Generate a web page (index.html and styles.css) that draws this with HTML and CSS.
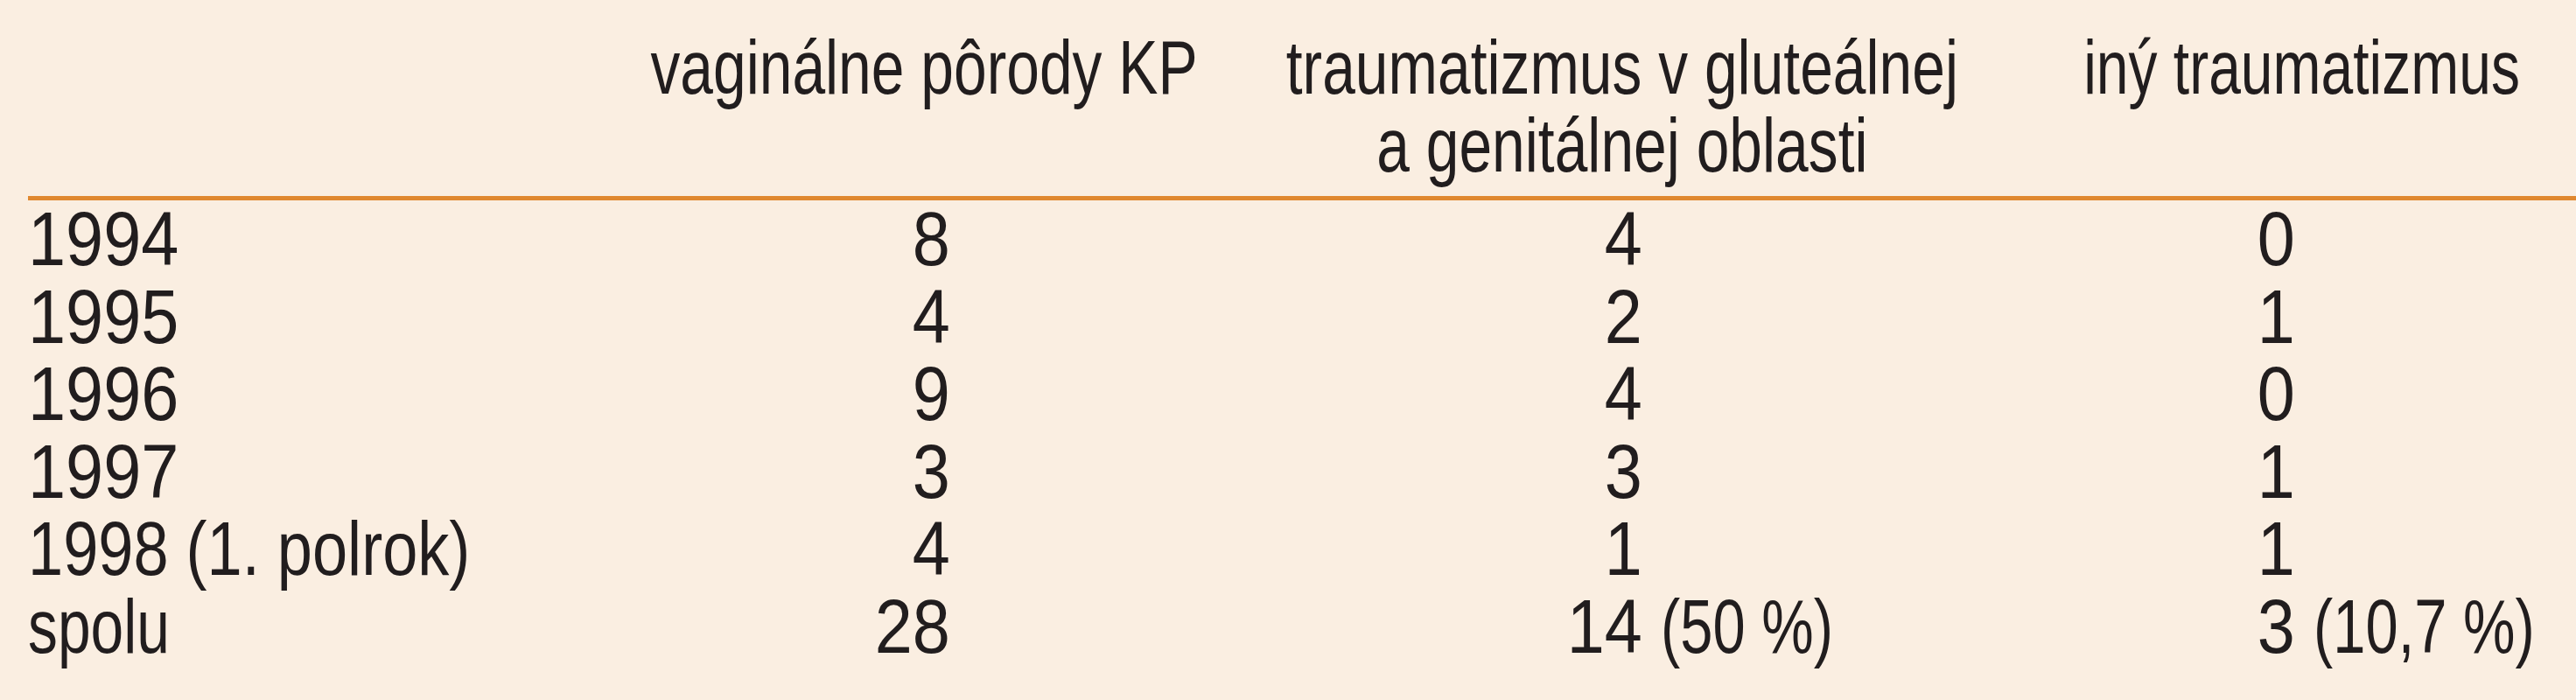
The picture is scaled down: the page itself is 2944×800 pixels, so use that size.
FILE: index.html
```html
<!DOCTYPE html>
<html lang="sk">
<head>
<meta charset="utf-8">
<title>Tabuľka</title>
<link rel="stylesheet" href="styles.css">
</head>
<body>
<div class="table">
  <div class="hcell h0"></div>
  <div class="hcell h1"><span class="t">vaginálne pôrody KP</span></div>
  <div class="hcell h2"><span class="t">traumatizmus v gluteálnej<br>a genitálnej oblasti</span></div>
  <div class="hcell h3"><span class="t">iný traumatizmus</span></div>
  <div class="rule"></div>

  <div class="lbl"><span class="yr">1994</span></div><div class="num"><span>8</span></div><div class="suf"></div><div class="num"><span>4</span></div><div class="suf"></div><div class="num"><span>0</span></div><div class="suf"></div>
  <div class="lbl"><span class="yr">1995</span></div><div class="num"><span>4</span></div><div class="suf"></div><div class="num"><span>2</span></div><div class="suf"></div><div class="num"><span>1</span></div><div class="suf"></div>
  <div class="lbl"><span class="yr">1996</span></div><div class="num"><span>9</span></div><div class="suf"></div><div class="num"><span>4</span></div><div class="suf"></div><div class="num"><span>0</span></div><div class="suf"></div>
  <div class="lbl"><span class="yr">1997</span></div><div class="num"><span>3</span></div><div class="suf"></div><div class="num"><span>3</span></div><div class="suf"></div><div class="num"><span>1</span></div><div class="suf"></div>
  <div class="lbl"><span class="mix">1998 (1. polrok)</span></div><div class="num"><span>4</span></div><div class="suf"></div><div class="num"><span>1</span></div><div class="suf"></div><div class="num"><span>1</span></div><div class="suf"></div>
  <div class="lbl"><span class="word">spolu</span></div><div class="num"><span>28</span></div><div class="suf"></div><div class="num"><span>14</span></div><div class="suf"><span>(50 %)</span></div><div class="num"><span>3</span></div><div class="suf"><span>(10,7 %)</span></div>
</div>
</body>
</html>
```

FILE: styles.css
```css
html, body {
  margin: 0;
  padding: 0;
}

body {
  width: 2944px;
  height: 800px;
  background: #faeee1;
  color: #211d1e;
  font-family: "Liberation Sans", Arial, sans-serif;
  font-size: 88px;
  overflow: hidden;
}

.table {
  display: grid;
  grid-template-columns: 668px 386px 326px 465px 419px 327px 1fr;
  width: 2884px;
  margin-left: 32px;
  padding-top: 32px;
  line-height: 88.5px;
}

.table span {
  display: inline-block;
  white-space: nowrap;
}

/* header */
.hcell {
  display: flex;
  justify-content: center;
  align-items: flex-start;
  line-height: 89px;
}

.hcell .t {
  text-align: center;
  transform: scaleX(0.77);
  transform-origin: 50% 50%;
}

.h0 { grid-column: 1 / 2; }
.h1 { grid-column: 2 / 4; }
.h2 { grid-column: 4 / 6; }
.h3 { grid-column: 6 / 8; padding-right: 12px; }
.h3 .t { transform: scaleX(0.75); }

.rule {
  grid-column: 1 / -1;
  height: 5px;
  margin-top: 14px;
  background: #e0882f;
}

/* body cells */
.lbl {
  display: flex;
  justify-content: flex-start;
}

.lbl span {
  transform-origin: 0 50%;
}

.lbl .yr { transform: scaleX(0.88); }
.lbl .mix { transform: scaleX(0.82); }
.lbl .word { transform: scaleX(0.77); }

.num {
  display: flex;
  justify-content: flex-end;
}

.num span {
  transform: scaleX(0.88);
  transform-origin: 100% 50%;
}

.suf {
  display: flex;
  justify-content: flex-start;
  padding-left: 21px;
}

.suf span {
  transform: scaleX(0.76);
  transform-origin: 0 50%;
}
```
